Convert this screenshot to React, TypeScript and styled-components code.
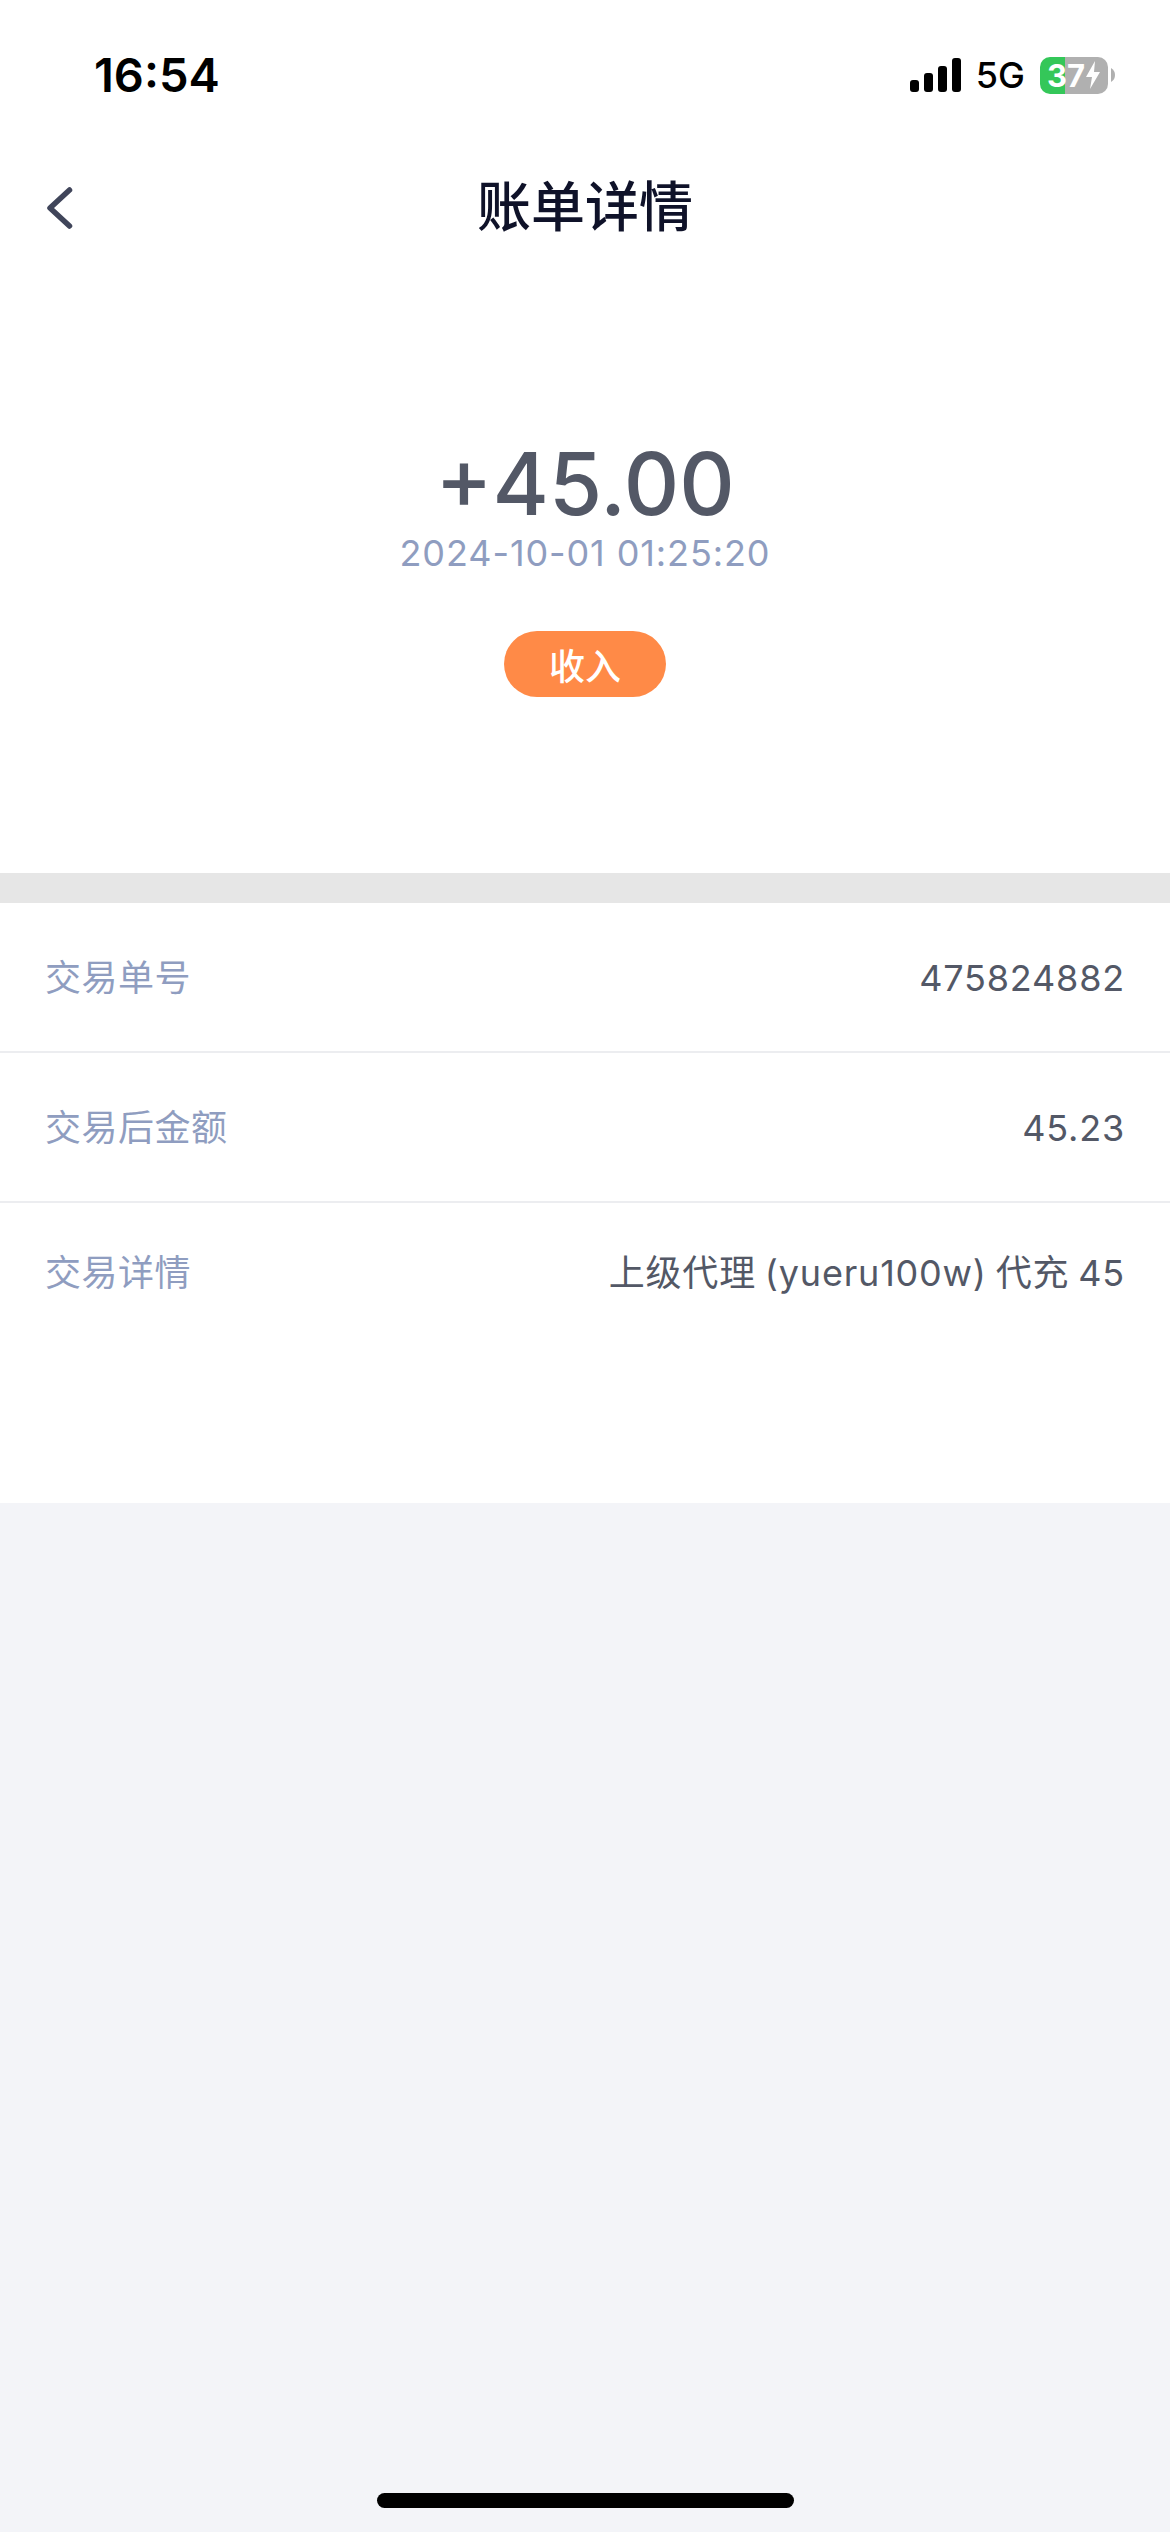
import { createGlobalStyle, styled } from 'styled-components';

const CJK = `Inter, 'Noto Sans CJK SC', sans-serif`;

const GlobalStyle = createGlobalStyle`
  html, body {
    margin: 0;
    padding: 0;
    background: #f3f4f8;
  }
  * {
    box-sizing: border-box;
  }
`;

const Page = styled.div`
  position: relative;
  width: 1170px;
  height: 2532px;
  overflow: hidden;
  background: #f3f4f8;
  font-family: ${CJK};
`;

const Top = styled.div`
  height: 873px;
  background: #fff;
`;

const StatusBar = styled.div`
  display: flex;
  align-items: center;
  justify-content: space-between;
  height: 150px;
  padding: 0 55px 0 94px;
`;

const Time = styled.div`
  margin-top: -2px;
  font-size: 47px;
  font-weight: 600;
  color: #000;
  font-family: Inter, sans-serif;
`;

const StatusIcons = styled.div`
  display: flex;
  align-items: center;
  gap: 15px;
`;

const Network = styled.span`
  font-size: 36px;
  font-weight: 500;
  color: #000;
`;

const Battery = styled.div`
  display: flex;
  align-items: center;
  gap: 3px;
`;

const BatteryBody = styled.div`
  display: flex;
  align-items: center;
  width: 68px;
  height: 37px;
  border-radius: 10px;
  overflow: hidden;
  background: linear-gradient(90deg, #34c759 0 25px, #b0b0b0 25px);
  color: #fff;
  font-size: 31px;
  font-weight: 700;
  padding-left: 7px;
`;

const NavBar = styled.div`
  position: relative;
  display: flex;
  align-items: center;
  justify-content: center;
  height: 112px;
  padding-bottom: 6px;
`;

const BackIcon = styled.svg`
  position: absolute;
  left: 45px;
  top: 35px;
`;

const Title = styled.h1`
  margin: 0;
  font-size: 54px;
  font-weight: 500;
  color: #0f1229;
`;

const Summary = styled.div`
  display: flex;
  flex-direction: column;
  align-items: center;
  padding-top: 170px;
`;

const Amount = styled.div`
  font-size: 86px;
  line-height: 104px;
  font-weight: 500;
  color: #535866;
`;

const DateText = styled.div`
  margin-top: -5px;
  font-size: 36px;
  line-height: 44px;
  letter-spacing: 0.9px;
  color: #8f9dc0;
`;

const Pill = styled.div`
  display: flex;
  align-items: center;
  justify-content: center;
  width: 162px;
  height: 66px;
  margin-top: 56px;
  border-radius: 33px;
  background: #ff8a47;
  color: #fff;
  font-size: 36px;
  font-weight: 500;
`;

const Divider = styled.div`
  height: 30px;
  background: #e6e6e6;
`;

const Details = styled.div`
  background: #fff;
`;

const Row = styled.div<{ $tall?: boolean }>`
  display: flex;
  align-items: flex-start;
  justify-content: space-between;
  height: ${(p) => (p.$tall ? '300px' : '150px')};
  padding: ${(p) => (p.$tall ? '45px' : '50px')} 45px 0 45px;
  border-bottom: ${(p) => (p.$tall ? 'none' : '2px solid #ecedf0')};
`;

const Label = styled.span`
  font-size: 36px;
  line-height: 50px;
  letter-spacing: 0.5px;
  color: #8f9dc0;
`;

const Value = styled.span`
  font-size: 36px;
  line-height: 50px;
  letter-spacing: 0.8px;
  word-spacing: -2px;
  color: #535866;
`;

const HomeBar = styled.div`
  position: absolute;
  left: 377px;
  bottom: 24px;
  width: 417px;
  height: 15px;
  border-radius: 8px;
  background: #000;
`;

export default function App() {
  return (
    <>
      <GlobalStyle />
      <Page>
        <Top>
          <StatusBar>
            <Time>16:54</Time>
            <StatusIcons>
              <svg width="51" height="34" viewBox="0 0 51 34">
                <rect x="0" y="22" width="9" height="12" rx="3" fill="#000" />
                <rect x="14" y="15" width="9" height="19" rx="3" fill="#000" />
                <rect x="28" y="8" width="9" height="26" rx="3" fill="#000" />
                <rect x="42" y="0" width="9" height="34" rx="3" fill="#000" />
              </svg>
              <Network>5G</Network>
              <Battery>
                <BatteryBody>
                  37
                  <svg width="16" height="28" viewBox="0 0 16 28">
                    <path d="M10 0 L1 16 H7 L5 28 L15 11 H9 Z" fill="#fff" />
                  </svg>
                </BatteryBody>
                <svg width="4" height="14" viewBox="0 0 4 14">
                  <path d="M0 0 C3 2 4 4 4 7 C4 10 3 12 0 14 Z" fill="#b0b0b0" />
                </svg>
              </Battery>
            </StatusIcons>
          </StatusBar>
          <NavBar>
            <BackIcon width="30" height="46" viewBox="0 0 30 46" fill="none">
              <path d="M24.5 5 L5 23 L24.5 41" stroke="#40455a" strokeWidth="5.5" strokeLinecap="round" strokeLinejoin="round" />
            </BackIcon>
            <Title>账单详情</Title>
          </NavBar>
          <Summary>
            <Amount>+45.00</Amount>
            <DateText>2024-10-01 01:25:20</DateText>
            <Pill>收入</Pill>
          </Summary>
        </Top>
        <Divider />
        <Details>
          <Row>
            <Label>交易单号</Label>
            <Value>475824882</Value>
          </Row>
          <Row>
            <Label>交易后金额</Label>
            <Value>45.23</Value>
          </Row>
          <Row $tall>
            <Label>交易详情</Label>
            <Value>上级代理 (yueru100w) 代充 45</Value>
          </Row>
        </Details>
        <HomeBar />
      </Page>
    </>
  );
}
